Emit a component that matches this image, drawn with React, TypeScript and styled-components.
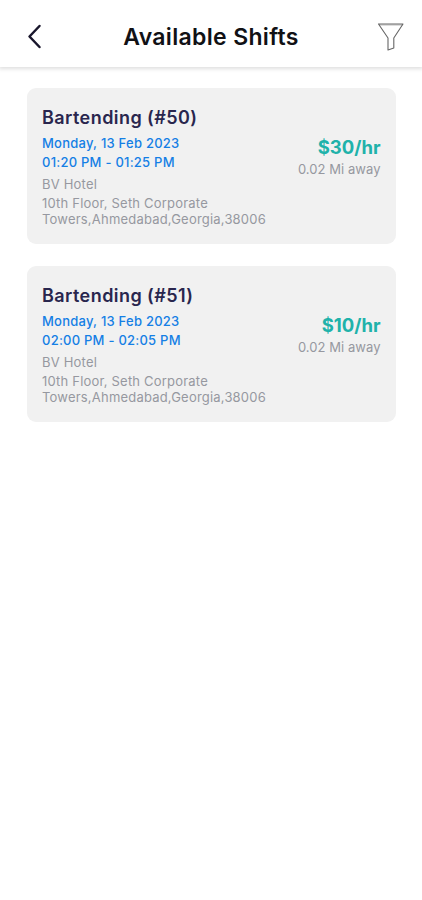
import React from "react";
import styled, { createGlobalStyle } from "styled-components";

const GlobalStyle = createGlobalStyle`
  * { box-sizing: border-box; }
  body { margin: 0; background: #fff; font-family: Inter, sans-serif; }
`;

const Screen = styled.div`
  width: 422px;
  height: 900px;
  background: #fff;
  overflow: hidden;
`;

const Header = styled.header`
  height: 67px;
  padding: 6px 17px 0;
  display: grid;
  grid-template-columns: 36px 1fr 36px;
  align-items: center;
  background: #fff;
  box-shadow: 0 1px 4px 1px rgba(0, 0, 0, 0.13);
`;

const Title = styled.h1`
  margin: 0;
  padding-top: 1px;
  text-align: center;
  white-space: nowrap;
  font-size: 23px;
  line-height: 28px;
  font-weight: 600;
  letter-spacing: 0.33px;
  color: #111115;
`;

const IconButton = styled.button<{ $end?: boolean }>`
  padding: ${(p) => (p.$end ? "0" : "0 0 0 9px")};
  border: 0;
  background: none;
  display: flex;
  justify-content: ${(p) => (p.$end ? "flex-end" : "flex-start")};
`;

const List = styled.main`
  padding: 21px 26px 0 27px;
  display: flex;
  flex-direction: column;
  gap: 21.5px;
`;

const Card = styled.article`
  height: 156px;
  padding: 18px 15.5px 0 15px;
  display: flex;
  justify-content: space-between;
  border-radius: 9px;
  background: #f1f1f1;
`;

const Details = styled.div`
  white-space: nowrap;
`;

const Role = styled.h2`
  margin: 0 0 4px;
  font-size: 18px;
  line-height: 24px;
  font-weight: 600;
  letter-spacing: 0.44px;
  color: #29264e;
`;

const Time = styled.div`
  font-size: 13px;
  line-height: 19px;
  font-weight: 500;
  letter-spacing: 0.24px;
  color: #157fe5;
`;

const Venue = styled.div`
  margin: 4px 0 3px;
  font-size: 13px;
  line-height: 16px;
  letter-spacing: 0.2px;
  color: #9698a0;
`;

const Address = styled.div`
  font-size: 13px;
  line-height: 16px;
  letter-spacing: 0.2px;
  color: #9698a0;
`;

const Pay = styled.div`
  padding-top: 28px;
  text-align: right;
  white-space: nowrap;
`;

const Rate = styled.div`
  font-size: 18.5px;
  line-height: 26px;
  font-weight: 700;
  color: #20b2aa;
`;

const Distance = styled.div`
  font-size: 13px;
  line-height: 19.5px;
  letter-spacing: 0.05px;
  color: #9698a0;
`;

const shifts = [
  { id: 50, time: "01:20 PM - 01:25 PM", rate: "$30" },
  { id: 51, time: "02:00 PM - 02:05 PM", rate: "$10" },
];

export default function App() {
  return (
    <Screen>
      <GlobalStyle />
      <Header>
        <IconButton aria-label="Back">
          <svg width="18" height="28" viewBox="0 0 18 28" fill="none" stroke="#19162c" strokeWidth="2.5" strokeLinecap="round" strokeLinejoin="round">
            <path d="M13.5 3 3.5 13.5 13.5 24" />
          </svg>
        </IconButton>
        <Title>Available Shifts</Title>
        <IconButton $end aria-label="Filter">
          <svg width="28" height="30" viewBox="0 0 28 30" fill="none" stroke="#666" strokeWidth="1.1" strokeLinejoin="round">
            <path d="M1.5 2H26L16.8 16V26L11 28V16Z" />
            <path d="M2 3H25.5" strokeOpacity="0.4" />
          </svg>
        </IconButton>
      </Header>
      <List>
        {shifts.map((s) => (
          <Card key={s.id}>
            <Details>
              <Role>Bartending (#{s.id})</Role>
              <Time>Monday, 13 Feb 2023</Time>
              <Time>{s.time}</Time>
              <Venue>BV Hotel</Venue>
              <Address>
                10th Floor, Seth Corporate
                <br />
                Towers,Ahmedabad,Georgia,38006
              </Address>
            </Details>
            <Pay>
              <Rate>{s.rate}/hr</Rate>
              <Distance>0.02 Mi away</Distance>
            </Pay>
          </Card>
        ))}
      </List>
    </Screen>
  );
}
